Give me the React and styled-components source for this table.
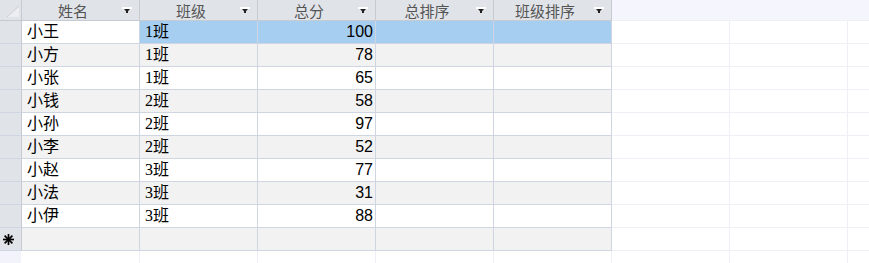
import React from "react";
import styled, { createGlobalStyle } from "styled-components";

const GlobalStyle = createGlobalStyle`
  html, body {
    margin: 0;
    padding: 0;
    background: #ffffff;
  }
`;

const Page = styled.div`
  position: relative;
  width: 869px;
  height: 263px;
  overflow: hidden;
  background-color: #ffffff;
  background-image:
    linear-gradient(#f5f6fd, #f5f6fd),
    linear-gradient(#f3f4fb, #f3f4fb),
    repeating-linear-gradient(to right, transparent 0 117px, #eef0f5 117px 118px),
    repeating-linear-gradient(to bottom, transparent 0 22px, #eef0f5 22px 23px);
  background-size: 100% 20px, 21px 100%, 100% 100%, 100% 100%;
  background-position: 0 0, 0 0, 22px 0, 0 -2px;
  background-repeat: no-repeat, no-repeat, repeat, repeat;
`;

const Sheet = styled.div`
  display: inline-flex;
  flex-direction: column;
  font-family: "Liberation Serif", "Noto Sans CJK SC", serif;
  font-size: 16px;
`;

const Row = styled.div`
  display: grid;
  grid-template-columns: 22px repeat(5, 118px);
  height: ${p => (p.$header ? "21px" : "23px")};
  background: ${p => (p.$alt ? "#f2f2f2" : "#ffffff")};
`;

const Corner = styled.div`
  background: #e0e3e8;
  border-right: 1px solid #c6cad1;
  border-bottom: 1px solid #c6cad1;
  display: flex;
  align-items: flex-end;
  justify-content: flex-end;
  padding: 0 2px 3px 0;
`;

const HeaderCell = styled.div`
  display: flex;
  align-items: center;
  background: #e0e3e8;
  border-right: 1px solid #c6cad1;
  border-bottom: 1px solid #c6cad1;
  color: #555555;
  font-family: "Noto Sans CJK SC", sans-serif;
  font-size: 15px;
  padding-right: 7px;
`;

const HeaderLabel = styled.span`
  flex: 1;
  text-align: center;
  line-height: 1;
  padding-left: 2px;
`;

const Selector = styled.div`
  background: #e0e3e8;
  border-right: 1px solid #c6cad1;
  border-bottom: 1px solid #cfd6e2;
  display: flex;
  align-items: center;
  justify-content: center;
  padding-right: 5px;
`;

const Cell = styled.div`
  display: flex;
  align-items: center;
  justify-content: ${p => (p.$num ? "flex-end" : "flex-start")};
  padding: ${p => (p.$num ? "0 2px 0 0" : "0 0 0 5px")};
  border-right: 1px solid #cfd6e2;
  border-bottom: 1px solid #cfd6e2;
  background: ${p => (p.$selected ? "#a6cef0" : "transparent")};
  color: #000;
  font-family: ${p =>
    p.$num ? '"Liberation Sans", sans-serif' : '"Liberation Serif", "Noto Sans CJK SC", serif'};
  font-size: 16px;
  line-height: 1;
  white-space: nowrap;
`;

const Arrow = () => (
  <svg width="10" height="7" viewBox="0 0 10 7">
    <rect x="0" y="0" width="10" height="2" fill="#ffffff" />
    <polygon points="1,1 9,1 5,6" fill="#ffffff" />
    <polygon points="2,2 8,2 5,5.5" fill="#222" />
    <rect x="4" y="4" width="2" height="2" fill="#222" />
  </svg>
);

const CornerMark = () => (
  <svg width="12" height="11" viewBox="0 0 12 11">
    <polygon points="0,11 12,11 12,0" fill="#eceef1" />
    <line x1="0" y1="11" x2="12" y2="0" stroke="#c9ccd2" strokeWidth="1" />
  </svg>
);

const NewRecord = () => (
  <svg width="11" height="11" viewBox="0 0 11 11">
    <g stroke="#000" strokeWidth="1.7">
      <line x1="5.5" y1="0" x2="5.5" y2="11" />
      <line x1="0" y1="5.5" x2="11" y2="5.5" />
      <line x1="1.6" y1="1.6" x2="9.4" y2="9.4" />
      <line x1="9.4" y1="1.6" x2="1.6" y2="9.4" />
    </g>
  </svg>
);

const columns = ["姓名", "班级", "总分", "总排序", "班级排序"];

const records = [
  ["小王", "1班", 100],
  ["小方", "1班", 78],
  ["小张", "1班", 65],
  ["小钱", "2班", 58],
  ["小孙", "2班", 97],
  ["小李", "2班", 52],
  ["小赵", "3班", 77],
  ["小法", "3班", 31],
  ["小伊", "3班", 88],
];

const App = () => (
  <Page>
    <GlobalStyle />
    <Sheet>
      <Row $header>
        <Corner>
          <CornerMark />
        </Corner>
        {columns.map(c => (
          <HeaderCell key={c}>
            <HeaderLabel>{c}</HeaderLabel>
            <Arrow />
          </HeaderCell>
        ))}
      </Row>
      {records.map(([name, cls, score], i) => {
        const selected = i === 0;
        return (
          <Row key={name} $alt={i % 2 === 1}>
            <Selector />
            <Cell>{name}</Cell>
            <Cell $selected={selected}>{cls}</Cell>
            <Cell $num $selected={selected}>{score}</Cell>
            <Cell $selected={selected} />
            <Cell $selected={selected} />
          </Row>
        );
      })}
      <Row $alt>
        <Selector>
          <NewRecord />
        </Selector>
        <Cell />
        <Cell />
        <Cell />
        <Cell />
        <Cell />
      </Row>
    </Sheet>
  </Page>
);

export default App;
